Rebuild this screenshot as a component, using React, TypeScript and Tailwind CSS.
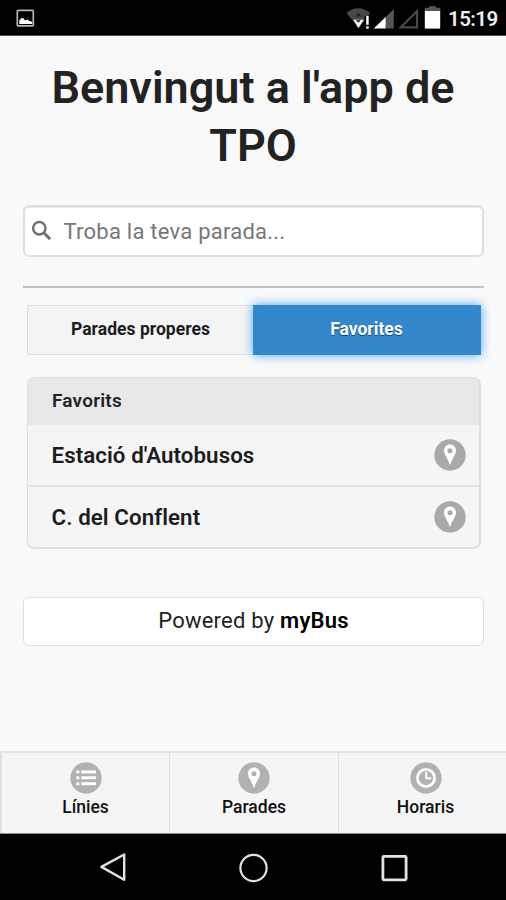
import React from "react";

function PinBadge({ color = "#a9a9a9" }: { color?: string }) {
  return (
    <svg width="32" height="32" viewBox="0 0 32 32" className="block shrink-0">
      <circle cx="16" cy="16" r="15.7" fill={color} />
      <path
        fillRule="evenodd"
        fill="#fff"
        d="M16 5.600c-3.400 0-6 2.500-6 5.900 0 4 3.700 7.500 5.400 13.500q.6 1.200 1.200 0c1.700-6 5.400-9.500 5.400-13.500 0-3.400-2.600-5.900-6-5.900zM16 9.300a2.500 2.500 0 1 1 0 5 2.500 2.500 0 0 1 0-5z"
      />
    </svg>
  );
}

function ListBadge() {
  return (
    <svg width="32" height="32" viewBox="0 0 32 32" className="block shrink-0">
      <circle cx="16" cy="16" r="15.7" fill="#b1b1b1" />
      <g fill="#fff">
        <rect x="6.300" y="8.400" width="3" height="3" />
        <rect x="6.300" y="14.300" width="3" height="3" />
        <rect x="6.300" y="20.200" width="3" height="3" />
        <rect x="11.300" y="8.400" width="14.700" height="3" />
        <rect x="11.300" y="14.300" width="14.700" height="3" />
        <rect x="11.300" y="20.200" width="14.700" height="3" />
      </g>
    </svg>
  );
}

function ClockBadge() {
  return (
    <svg width="32" height="32" viewBox="0 0 32 32" className="block shrink-0">
      <circle cx="16" cy="16" r="15.7" fill="#b1b1b1" />
      <circle cx="16" cy="16" r="8.600" fill="none" stroke="#fff" strokeWidth="2.800" />
      <path d="M16.200 10v6.200h5" fill="none" stroke="#fff" strokeWidth="2" />
    </svg>
  );
}

function StatusBar() {
  return (
    <div className="flex h-[36px] shrink-0 items-start justify-between border-b border-[#555] bg-black">
      <svg width="40" height="35" viewBox="0 0 40 35" className="block">
        <rect x="17.300" y="10.300" width="16" height="15.600" rx="0.800" fill="none" stroke="#b4b4b4" strokeWidth="1.700" />
        <path d="M19.300 24v-3.800l2.300-2.300 1.800.4 1.700 2.200 2.500-.9 1.500 1.300 1.800.2 1.300 1.300V24z" fill="#fff" />
      </svg>
      <div className="flex">
        <svg width="100" height="35" viewBox="345 0 100 35" className="block">
          <path d="M346.500 13c6.500-6.300 17-6.300 23.800 0l-2.300 3h-3.500v4.500L358.400 28z" fill="#484848" />
          <path d="M353.400 19.800h10.400L358.400 28z" fill="#fff" />
          <path d="M355.500 16.500l2.900-4 2.900 4z" fill="#222" />
          <path d="M355.900 20h5l-2.500 2.900z" fill="#333" />
          <rect x="366.200" y="16" width="2.500" height="8.800" fill="#fff" />
          <rect x="366.200" y="26.300" width="2.500" height="2.400" fill="#fff" />
          <path d="M393.800 9v19.600h-8.200V17.200z" fill="#555" />
          <path d="M385.700 16.900v11.700h-12z" fill="#fff" />
          <path d="M417 11.200v16.200h-16.300z" fill="none" stroke="#484848" strokeWidth="2.200" />
          <rect x="429" y="6.200" width="7" height="4" fill="#555" />
          <rect x="424.800" y="7.800" width="15.400" height="4" fill="#555" />
          <rect x="424.800" y="11" width="15.400" height="17.600" fill="#fff" />
        </svg>
        <span className="w-[61px] whitespace-nowrap pl-[3px] text-[20.500px] font-semibold leading-[39px] tracking-[-0.550px] text-[#eee]">15:19</span>
      </div>
    </div>
  );
}

function FavoriteRow({ name }: { name: string }) {
  return (
    <div className="flex h-[60px] items-center justify-between pl-[23.500px] pr-[13px]">
      <span className="text-[22.300px] font-semibold leading-[58px] tracking-[0.070px] text-[#1c1c1c]">{name}</span>
      <PinBadge />
    </div>
  );
}

export default function App() {
  return (
    <div className="flex h-[900px] w-[506px] flex-col overflow-hidden bg-[#f9f9f9] font-['Roboto','Liberation_Sans',sans-serif]">
      <StatusBar />

      <main className="flex flex-1 flex-col px-[23px] pt-[23px]">
        <h1 className="text-center text-[45px] font-semibold leading-[58px] text-[#222]">
          Benvingut a l'app de
          <br />
          TPO
        </h1>

        <div className="mt-[30px] flex h-[52px] w-[461px] items-center rounded-[6px] border-2 border-[#dfdfdf] bg-white pl-[6px] shadow-[inset_0_1px_1px_#e6e6e6]">
          <svg width="22" height="22" viewBox="0 0 22 22" className="block">
            <circle cx="8.300" cy="8.300" r="6.200" fill="none" stroke="#727272" strokeWidth="2.500" />
            <path d="M12.800 12.800l6.300 6.300" stroke="#727272" strokeWidth="3" />
          </svg>
          <span className="pl-[10.500px] pt-[1px] text-[22px] leading-[46px] tracking-[0.240px] text-[#777]">Troba la teva parada...</span>
        </div>

        <div className="mt-[29px] h-[2px] w-[461px] bg-[#c2c2c2]" />

        <div className="ml-[4px] mt-[17px] flex h-[50px] w-[454px]">
          <div className="flex w-[226px] items-center justify-center rounded-l-[2px] border border-r-0 border-[#dedede] bg-[#f4f4f4] pb-[2px] text-[17.500px] font-bold tracking-[0.030px] text-[#1c1c1c]">
            Parades properes
          </div>
          <div className="flex w-[228px] items-center justify-center bg-[#3388cc] pb-[2px] pr-[1px] text-[17.500px] font-bold text-white shadow-[0_0_10px_#4ba6e8] [text-shadow:0_1px_1px_#0a4070]">
            Favorites
          </div>
        </div>

        <div className="ml-[4px] mt-[22px] h-[172px] w-[454px] overflow-hidden rounded-[7px] border border-b-2 border-r-2 border-[#dfdfdf] bg-[#f5f5f5]">
          <div className="h-[47px] bg-[#e8e8e8] pl-[24px] text-[19px] font-semibold leading-[46px] tracking-[0.200px] text-[#222]">Favorits</div>
          <FavoriteRow name="Estació d'Autobusos" />
          <div className="h-[2px] bg-[#e3e3e3]" />
          <FavoriteRow name="C. del Conflent" />
        </div>

        <div className="mt-[48px] h-[49px] w-[461px] rounded-[6px] border-[1.500px] border-[#dfdfdf] bg-white text-center text-[22px] leading-[46px] tracking-[0.220px] text-[#222]">
          Powered by <span className="font-semibold text-black">myBus</span>
        </div>
      </main>

      <footer className="flex h-[82px] shrink-0 border-t-2 border-[#e2e2e2] bg-[#f5f5f5] text-[17.500px] font-medium leading-[20px] text-[#111]">
        <div className="flex w-[170px] shrink-0 flex-col items-center border-l-2 border-r border-[#e0e0e0] pt-[9px]">
          <ListBadge />
          <span className="mt-[3px]">Línies</span>
        </div>
        <div className="flex w-[169px] shrink-0 flex-col items-center border-r border-[#e0e0e0] pt-[9px]">
          <PinBadge color="#b1b1b1" />
          <span className="mt-[3px]">Parades</span>
        </div>
        <div className="flex w-[173px] shrink-0 flex-col items-center pt-[9px]">
          <ClockBadge />
          <span className="mt-[3px]">Horaris</span>
        </div>
      </footer>

      <nav className="h-[67px] shrink-0 border-t border-[#888] bg-black">
        <svg width="506" height="66" viewBox="0 834 506 66" fill="none" stroke="#e2e2e2" className="block">
          <path d="M124.200 854.500v25.300l-22.800-12.900z" strokeWidth="2.400" strokeLinejoin="round" />
          <circle cx="253.500" cy="868" r="13.100" strokeWidth="2.200" />
          <rect x="382.900" y="856.400" width="23.200" height="23.400" rx="1" strokeWidth="2.800" />
        </svg>
      </nav>
    </div>
  );
}
